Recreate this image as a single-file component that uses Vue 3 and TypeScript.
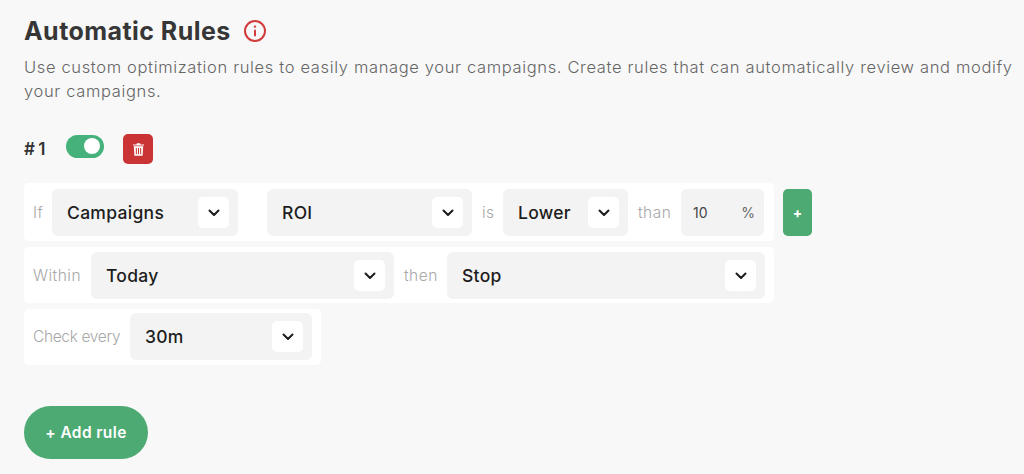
<script setup lang="ts">
interface Part {
  label?: string
  value?: string
  width: number
  gap?: number
  suffix?: string
  tight?: boolean
}

const rows: Part[][] = [
  [
    { label: 'If', width: 9 },
    { value: 'Campaigns', width: 186 },
    { value: 'ROI', width: 205, gap: 29 },
    { label: 'is', width: 11 },
    { value: 'Lower', width: 125 },
    { label: 'than', width: 33 },
    { value: '10', width: 83, suffix: '%' }
  ],
  [
    { label: 'Within', width: 48 },
    { value: 'Today', width: 303 },
    { label: 'then', width: 33 },
    { value: 'Stop', width: 318 }
  ],
  [
    { label: 'Check every', width: 87, tight: true },
    { value: '30m', width: 182 }
  ]
]
</script>

<template>
  <section class="page">
    <div class="title">
      <h1>Automatic Rules</h1>
      <svg class="info" viewBox="0 0 24 24" width="24" height="24" fill="none">
        <circle cx="12" cy="12" r="10" stroke="#d13c3c" stroke-width="2" />
        <rect x="11" y="10.5" width="2" height="7" rx="1" fill="#d13c3c" />
        <circle cx="12" cy="7.6" r="1.2" fill="#d13c3c" />
      </svg>
    </div>
    <p class="intro">
      Use custom optimization rules to easily manage your campaigns. Create rules that can automatically review and modify your campaigns.
    </p>

    <div class="rule-head">
      <span class="num"># 1</span>
      <span class="toggle"><span class="knob"></span></span>
      <button class="trash" type="button">
        <svg viewBox="0 0 14 16" width="11" height="13" fill="#fff">
          <path d="M5 0h4l.6 1.5H14V3H0V1.5h4.4zM1 4h12l-.8 12H1.8zm2.6 2v8h1.3V6zm2.75 0v8h1.3V6zM9.1 6v8h1.3V6z" fill-rule="evenodd" />
        </svg>
      </button>
    </div>

    <div class="rows">
      <div v-for="(row, i) in rows" :key="i" class="row-line">
        <div class="row">
          <template v-for="(part, j) in row" :key="j">
            <span
              v-if="part.label"
              class="label"
              :class="{ tight: part.tight }"
              :style="{ width: part.width + 'px' }"
            >{{ part.label }}</span>
            <div v-else-if="part.suffix" class="field input" :style="{ width: part.width + 'px' }">
              <span>{{ part.value }}</span>
              <span class="suffix">{{ part.suffix }}</span>
            </div>
            <div
              v-else
              class="field select"
              :style="{ width: part.width + 'px', marginLeft: part.gap ? part.gap - 10 + 'px' : undefined }"
            >
              <span>{{ part.value }}</span>
              <span class="chev">
                <svg viewBox="0 0 12 8" width="12" height="8" fill="none">
                  <path d="M1.5 1.5 6 6l4.5-4.5" stroke="#1c1c1c" stroke-width="2" stroke-linecap="round" stroke-linejoin="round" />
                </svg>
              </span>
            </div>
          </template>
        </div>
        <button v-if="i === 0" class="plus" type="button">+</button>
      </div>
    </div>

    <button class="add" type="button">+ Add rule</button>
  </section>
</template>

<style>
html,
body {
  margin: 0;
  background: #f8f8f8;
}
</style>

<style scoped>
.page {
  box-sizing: border-box;
  height: 474px;
  padding: 15px 0 0 24px;
  overflow: hidden;
  font-family: Inter, "Liberation Sans", sans-serif;
}

.title {
  display: flex;
  align-items: center;
  gap: 12px;
  height: 32px;
}

h1 {
  margin: 0;
  font-size: 25px;
  font-weight: 700;
  letter-spacing: 0.45px;
  color: #363636;
}

.info {
  display: block;
}

.intro {
  margin: 8px 0 0;
  width: 996px;
  font-size: 16.5px;
  line-height: 24px;
  font-weight: 300;
  letter-spacing: 0.65px;
  color: #666;
}

.rule-head {
  display: flex;
  align-items: center;
  margin-top: 31px;
  height: 30px;
}

.num {
  width: 42px;
  font-size: 17px;
  font-weight: 600;
  color: #333;
  word-spacing: -1px;
}

.toggle {
  display: flex;
  align-items: center;
  justify-content: flex-end;
  box-sizing: border-box;
  width: 38px;
  height: 23px;
  margin-top: -6px;
  padding-right: 4px;
  border-radius: 12px;
  background: #45b27c;
}

.knob {
  width: 16px;
  height: 16px;
  border-radius: 50%;
  background: #fff;
}

.trash {
  display: flex;
  align-items: center;
  justify-content: center;
  width: 30px;
  height: 30px;
  margin-left: 19px;
  padding: 0;
  border: none;
  border-radius: 5px;
  background: #cb3434;
}

.rows {
  display: flex;
  flex-direction: column;
  gap: 6px;
  margin-top: 19px;
}

.row-line {
  display: flex;
  align-items: center;
  gap: 9px;
}

.row {
  display: flex;
  align-items: center;
  gap: 10px;
  box-sizing: border-box;
  padding: 5px 9px 4px;
  border-radius: 5px;
  background: #fff;
}

.row-line:first-child .row {
  padding: 6px 10px 5px 9px;
}

.row-line:last-child .row {
  padding: 4px 9px 5px;
}

.label {
  flex: none;
  font-size: 15.5px;
  font-weight: 300;
  letter-spacing: 0.5px;
  color: #a8a8a8;
  white-space: nowrap;
}

.label.tight {
  letter-spacing: -0.35px;
}

.field {
  display: flex;
  align-items: center;
  justify-content: space-between;
  box-sizing: border-box;
  height: 47px;
  border-radius: 6px;
  background: #f3f3f3;
  color: #1d1d1d;
}

.select {
  padding: 0 9px 0 15px;
  font-size: 17.5px;
  font-weight: 500;
  letter-spacing: 0.3px;
}

.input {
  padding: 0 9px 0 12px;
  font-size: 14px;
  color: #444;
}

.suffix {
  color: #666;
}

.chev {
  display: flex;
  align-items: center;
  justify-content: center;
  width: 31px;
  height: 31px;
  border-radius: 5px;
  background: #fff;
}

.plus {
  width: 29px;
  height: 47px;
  padding: 0;
  border: none;
  border-radius: 5px;
  background: #4caa72;
  color: #fff;
  font-family: inherit;
  font-size: 14px;
  font-weight: 700;
}

.add {
  display: block;
  width: 124px;
  height: 53px;
  margin-top: 41px;
  padding: 0;
  border: none;
  border-radius: 27px;
  background: #4caa72;
  color: #fff;
  font-family: inherit;
  font-size: 15.5px;
  font-weight: 600;
  letter-spacing: 0.4px;
}
</style>
